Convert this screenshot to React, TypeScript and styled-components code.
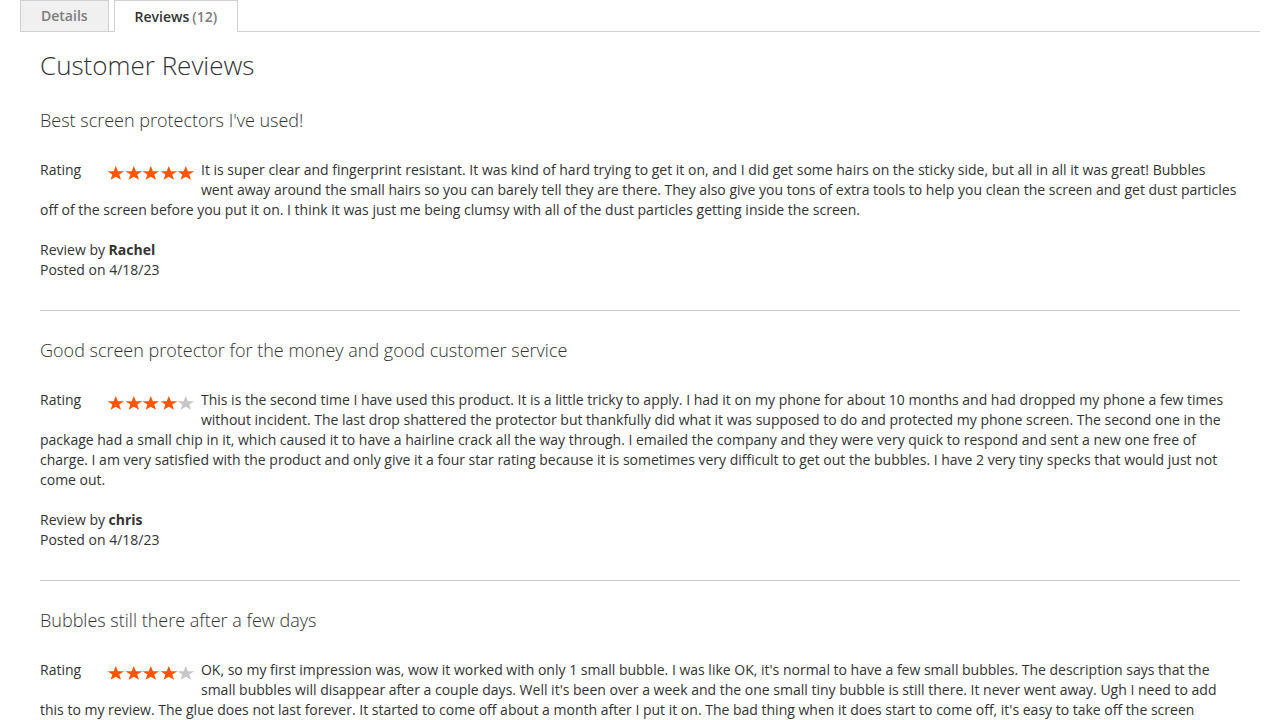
import React from "react";
import styled, { createGlobalStyle } from "styled-components";

const GlobalStyle = createGlobalStyle`
  html, body { margin: 0; padding: 0; overflow: hidden; background: #fff; }
  body {
    font-family: "Open Sans", "Liberation Sans", sans-serif;
    font-size: 14px;
    line-height: 20px;
    color: #333;
  }
  * { box-sizing: border-box; }
`;

const Page = styled.div`
  padding: 0 20px;
`;

const TabBar = styled.div`
  display: flex;
  gap: 5px;
  height: 32px;
  border-bottom: 1px solid #d1d1d1;
`;

const Tab = styled.div<{ $active?: boolean }>`
  display: flex;
  align-items: center;
  padding: 0 20px;
  height: ${(p) => (p.$active ? "32px" : "31px")};
  border: 1px solid #d1d1d1;
  border-bottom: none;
  background: ${(p) => (p.$active ? "#fff" : "#f0f0f0")};
  color: ${(p) => (p.$active ? "#333" : "#7d7d7d")};
  font-size: 14px;
  font-weight: 600;
  line-height: 20px;
  position: relative;
  z-index: 1;
`;

const Counter = styled.span`
  color: #7d7d7d;
  font-weight: 600;
  margin-left: 3px;
`;

const Content = styled.div`
  padding: 18px 20px 0;
`;

const Heading = styled.h2`
  margin: 0 0 1px;
  font-size: 26px;
  font-weight: 300;
  line-height: 30px;
  color: #333;
`;

const List = styled.ol`
  list-style: none;
  margin: 0;
  padding: 0;
`;

const Item = styled.li`
  padding: 29px 0 30px;
  border-bottom: 1px solid #c9c9c9;
`;

const Title = styled.h3`
  margin: 0 0 30px;
  font-size: 18px;
  font-weight: 300;
  line-height: 20px;
  color: #333;
`;

const Ratings = styled.div`
  float: left;
  display: flex;
  height: 20px;
  margin: 0 6px 20px 0;
`;

const RatingLabel = styled.span`
  width: 67px;
  line-height: 20px;
`;

const Stars = styled.span`
  display: flex;
  align-items: center;
  padding-top: 5px;
  height: 20px;
`;

const Text = styled.div`
  line-height: 20px;
`;

const Details = styled.div`
  clear: both;
  margin-top: 20px;
  line-height: 20px;
`;

const Author = styled.strong`
  font-weight: 700;
`;

const Star = ({ filled }: { filled: boolean }) => (
  <svg width="17.6" height="14" viewBox="0 0 24 22" preserveAspectRatio="none">
    <polygon
      points="12,0 14.9,8.1 23.4,8.3 16.7,13.5 19.1,21.7 12,16.9 4.9,21.7 7.3,13.5 0.6,8.3 9.1,8.1"
      fill={filled ? "#ff5501" : "#c7c7c7"}
    />
  </svg>
);

type Review = {
  title: string;
  rating: number;
  text: string;
  author: string;
  date: string;
};

const reviews: Review[] = [
  {
    title: "Best screen protectors I've used!",
    rating: 5,
    text:
      "It is super clear and fingerprint resistant. It was kind of hard trying to get it on, and I did get some hairs on the sticky side, but all in all it was great! Bubbles went away around the small hairs so you can barely tell they are there. They also give you tons of extra tools to help you clean the screen and get dust particles off of the screen before you put it on. I think it was just me being clumsy with all of the dust particles getting inside the screen.",
    author: "Rachel",
    date: "4/18/23",
  },
  {
    title: "Good screen protector for the money and good customer service",
    rating: 4,
    text:
      "This is the second time I have used this product. It is a little tricky to apply. I had it on my phone for about 10 months and had dropped my phone a few times without incident. The last drop shattered the protector but thankfully did what it was supposed to do and protected my phone screen. The second one in the package had a small chip in it, which caused it to have a hairline crack all the way through. I emailed the company and they were very quick to respond and sent a new one free of charge. I am very satisfied with the product and only give it a four star rating because it is sometimes very difficult to get out the bubbles. I have 2 very tiny specks that would just not come out.",
    author: "chris",
    date: "4/18/23",
  },
  {
    title: "Bubbles still there after a few days",
    rating: 4,
    text:
      "OK, so my first impression was, wow it worked with only 1 small bubble. I was like OK, it's normal to have a few small bubbles. The description says that the small bubbles will disappear after a couple days. Well it's been over a week and the one small tiny bubble is still there. It never went away. Ugh I need to add this to my review. The glue does not last forever. It started to come off about a month after I put it on. The bad thing when it does start to come off, it's easy to take off the screen protector and put it back on, but then it just collects dust and more bubbles.",
    author: "Mike",
    date: "4/18/23",
  },
];

export default function App() {
  return (
    <>
      <GlobalStyle />
      <Page>
        <TabBar>
          <Tab>Details</Tab>
          <Tab $active>
            Reviews<Counter>(12)</Counter>
          </Tab>
        </TabBar>
        <Content>
          <Heading>Customer Reviews</Heading>
          <List>
            {reviews.map((r) => (
              <Item key={r.title}>
                <Title>{r.title}</Title>
                <Ratings>
                  <RatingLabel>Rating</RatingLabel>
                  <Stars>
                    {[0, 1, 2, 3, 4].map((i) => (
                      <Star key={i} filled={i < r.rating} />
                    ))}
                  </Stars>
                </Ratings>
                <Text>{r.text}</Text>
                <Details>
                  <div>
                    Review by <Author>{r.author}</Author>
                  </div>
                  <div>Posted on {r.date}</div>
                </Details>
              </Item>
            ))}
          </List>
        </Content>
      </Page>
    </>
  );
}
